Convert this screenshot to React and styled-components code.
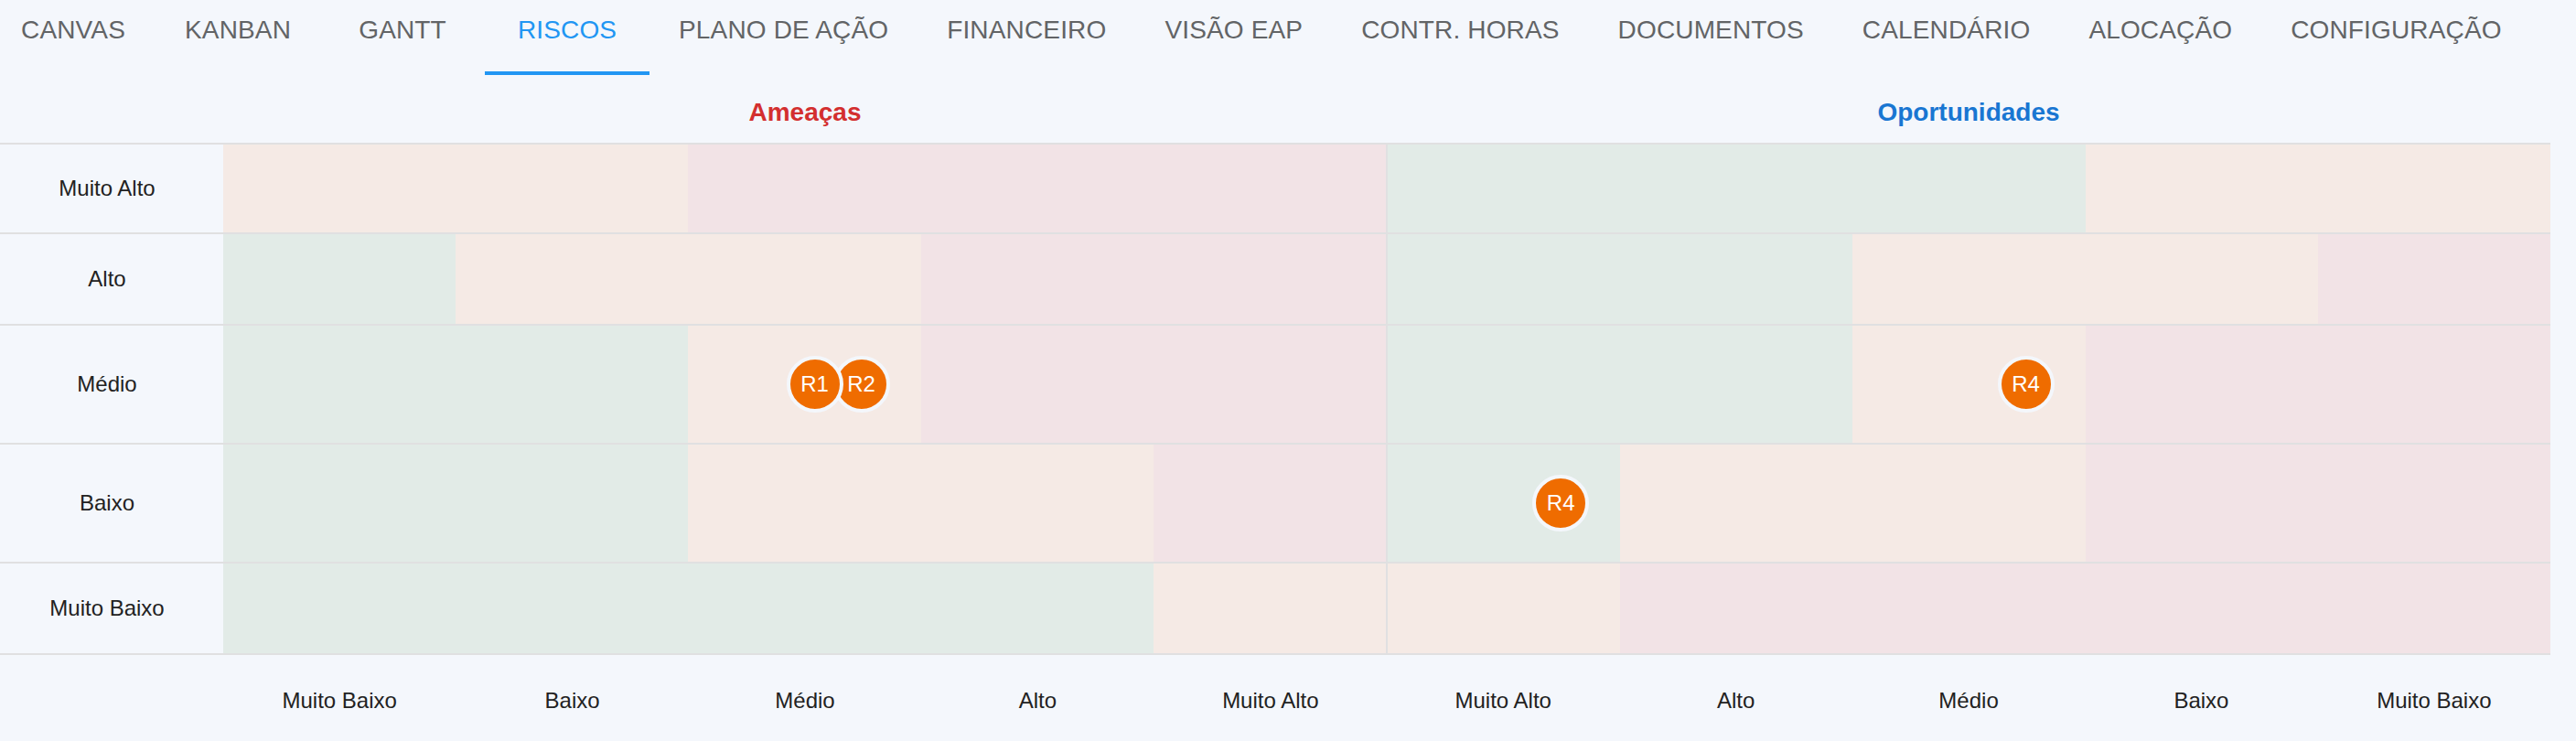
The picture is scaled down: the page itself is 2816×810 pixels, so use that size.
import styled, { createGlobalStyle } from 'styled-components';

const G = 'green';
const P = 'peach';
const R = 'pink';

const cores = {
  green: '#e2ebe7',
  peach: '#f5eae5',
  pink: '#f2e3e6',
};

const abas = [
  'CANVAS', 'KANBAN', 'GANTT', 'RISCOS', 'PLANO DE AÇÃO', 'FINANCEIRO', 'VISÃO EAP',
  'CONTR. HORAS', 'DOCUMENTOS', 'CALENDÁRIO', 'ALOCAÇÃO', 'CONFIGURAÇÃO',
];

const linhas = [
  { nome: 'Muito Alto', ameacas: [P, P, R, R, R], oportunidades: [G, G, G, P, P] },
  { nome: 'Alto', ameacas: [G, P, P, R, R], oportunidades: [G, G, P, P, R] },
  { nome: 'Médio', ameacas: [G, G, P, R, R], oportunidades: [G, G, P, R, R], riscosA: { 2: ['R1', 'R2'] }, riscosO: { 2: ['R4'] } },
  { nome: 'Baixo', ameacas: [G, G, P, P, R], oportunidades: [G, P, P, R, R], riscosO: { 0: ['R4'] } },
  { nome: 'Muito Baixo', ameacas: [G, G, G, G, P], oportunidades: [P, R, R, R, R] },
];

const eixoAmeacas = ['Muito Baixo', 'Baixo', 'Médio', 'Alto', 'Muito Alto'];
const eixoOportunidades = ['Muito Alto', 'Alto', 'Médio', 'Baixo', 'Muito Baixo'];

const EstilosGlobais = createGlobalStyle`
  body {
    margin: 0;
    background: #f4f7fc;
    font-family: 'Liberation Sans', Arial, sans-serif;
  }
`;

const Pagina = styled.div`
  width: 2816px;
  height: 810px;
  overflow: hidden;
  background: #f4f7fc;
`;

const BarraAbas = styled.nav`
  display: flex;
  height: 82px;
  margin-left: -10px;
`;

const Aba = styled.div`
  box-sizing: border-box;
  display: flex;
  justify-content: center;
  align-items: flex-start;
  min-width: 180px;
  height: 82px;
  padding: 15px 32px 0;
  font-size: 28px;
  line-height: 35px;
  letter-spacing: 0.15px;
  color: ${({ $ativa }) => ($ativa ? '#2196f3' : '#626466')};
  border-bottom: 4px solid ${({ $ativa }) => ($ativa ? '#2196f3' : 'transparent')};
  white-space: nowrap;
`;

const Matriz = styled.div`
  display: flex;
  flex-direction: column;
  padding-right: 28px;
`;

const Cabecalho = styled.div`
  box-sizing: border-box;
  display: flex;
  height: 74px;
  padding-top: 8px;
  align-items: center;
`;

const Espaco = styled.div`
  width: 244px;
  flex-shrink: 0;
`;

const TituloLado = styled.div`
  flex: 1;
  text-align: center;
  font-size: 28px;
  font-weight: 700;
  color: ${({ $cor }) => $cor};
`;

const Linha = styled.div`
  display: flex;
  box-sizing: border-box;
  height: ${({ $alta }) => ($alta ? '130px' : '100px')};
  border-bottom: 2px solid #e0e0e1;
  border-top: ${({ $primeira }) => ($primeira ? '2px solid #e0e0e1' : 'none')};
`;

const Rotulo = styled.div`
  box-sizing: border-box;
  width: 244px;
  flex-shrink: 0;
  display: flex;
  align-items: center;
  justify-content: center;
  padding-right: 10px;
  font-size: 24px;
  color: #222;
`;

const Lado = styled.div`
  flex: 1;
  display: flex;
  border-left: ${({ $divisor }) => ($divisor ? '2px solid #e0e0e1' : 'none')};
`;

const Celula = styled.div`
  flex: 1;
  display: flex;
  align-items: center;
  justify-content: flex-end;
  padding-right: 34px;
  background: ${({ $tipo }) => cores[$tipo]};
`;

const Bolha = styled.div`
  box-sizing: border-box;
  width: 62px;
  height: 62px;
  border-radius: 50%;
  border: 4px solid #f4f7fc;
  background: #ef6c00;
  color: #fff;
  font-size: 24px;
  display: flex;
  align-items: center;
  justify-content: center;
  position: relative;
  z-index: ${({ $ordem }) => 10 - $ordem};
  margin-left: ${({ $ordem }) => ($ordem > 0 ? '-11px' : '0')};
`;

const Eixo = styled.div`
  display: flex;
  height: 100px;
  align-items: center;
`;

const RotuloEixo = styled.div`
  flex: 1;
  text-align: center;
  font-size: 24px;
  color: #222;
`;

const Celulas = ({ tipos, riscos = {} }) => tipos.map((tipo, i) => (
  <Celula key={i} $tipo={tipo}>
    {(riscos[i] || []).map((r, j) => <Bolha key={r} $ordem={j}>{r}</Bolha>)}
  </Celula>
));

const App = () => (
  <Pagina>
    <EstilosGlobais />
    <BarraAbas>
      {abas.map((aba) => <Aba key={aba} $ativa={aba === 'RISCOS'}>{aba}</Aba>)}
    </BarraAbas>
    <Matriz>
      <Cabecalho>
        <Espaco />
        <TituloLado $cor="#d32f2f">Ameaças</TituloLado>
        <TituloLado $cor="#1976d2">Oportunidades</TituloLado>
      </Cabecalho>
      {linhas.map((linha, i) => (
        <Linha key={linha.nome} $primeira={i === 0} $alta={!!(linha.riscosA || linha.riscosO) || i === 3}>
          <Rotulo>{linha.nome}</Rotulo>
          <Lado>
            <Celulas tipos={linha.ameacas} riscos={linha.riscosA} />
          </Lado>
          <Lado $divisor>
            <Celulas tipos={linha.oportunidades} riscos={linha.riscosO} />
          </Lado>
        </Linha>
      ))}
      <Eixo>
        <Espaco />
        {eixoAmeacas.map((e, i) => <RotuloEixo key={'a' + i}>{e}</RotuloEixo>)}
        {eixoOportunidades.map((e, i) => <RotuloEixo key={'o' + i}>{e}</RotuloEixo>)}
      </Eixo>
    </Matriz>
  </Pagina>
);

export default App;
